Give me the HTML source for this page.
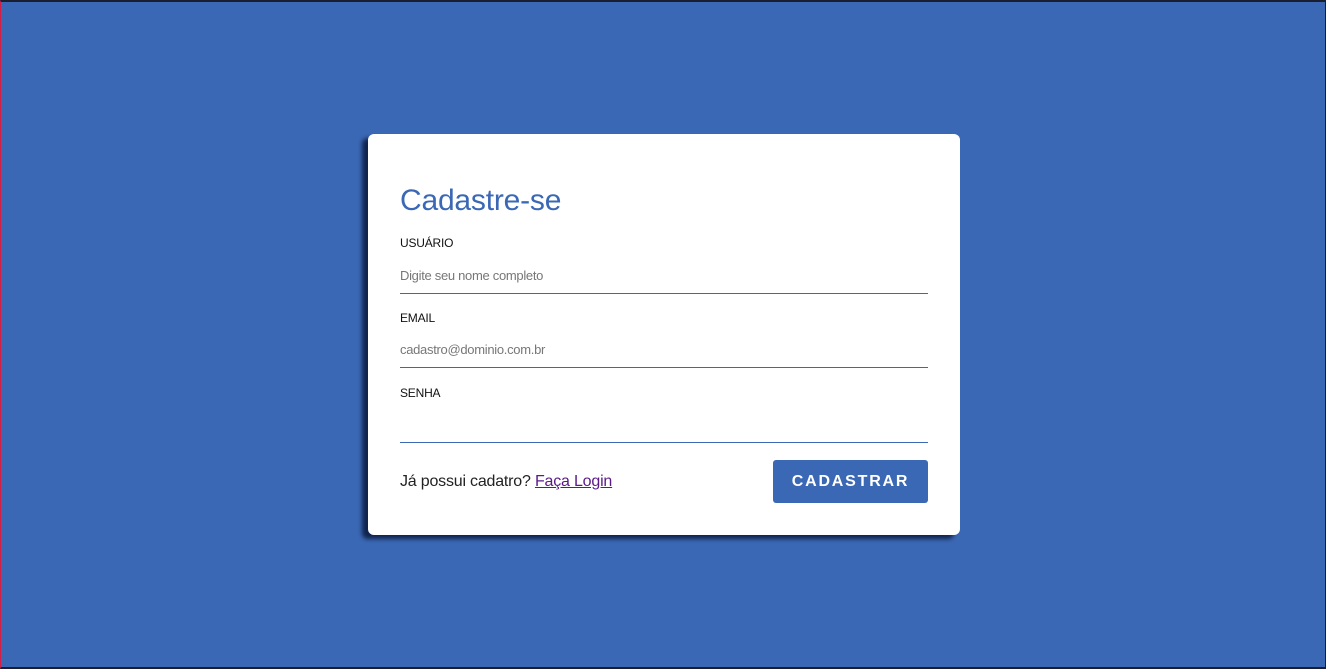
<!DOCTYPE html>
<html><head><meta charset="utf-8"><style>
html,body{margin:0;padding:0;}
body{width:1326px;height:669px;background:#3b68b5;position:relative;overflow:hidden;font-family:"Liberation Sans",sans-serif;}
.frame{position:absolute;left:0;top:0;width:1326px;height:669px;box-sizing:border-box;border-top:2px solid #1b1e2e;border-bottom:2px solid #1b1e2e;border-right:1px solid #1b1e2e;border-left:1px solid #d0204a;}
.card{position:absolute;left:368px;top:134px;width:592px;height:401px;background:#fff;border-radius:6px;box-shadow:-6px 4px 4px rgba(10,25,60,.85);}
h1{position:absolute;left:32px;top:50px;margin:0;font-weight:normal;font-size:30px;color:#3b68b5;letter-spacing:-0.2px;}
.lbl{position:absolute;left:32px;font-size:12px;color:#111;letter-spacing:-0.2px;}
.ph{position:absolute;left:32px;font-size:13px;color:#777;letter-spacing:-0.3px;}
.line{position:absolute;left:32px;width:528px;height:1px;background:#3b68b5;}
.txt{position:absolute;left:32px;top:339px;font-size:16px;color:#222;letter-spacing:-0.2px;}
.txt a{color:#5a1a8a;text-decoration:underline;}
.btn{position:absolute;left:405px;top:326px;width:155px;height:43px;background:#3b68b5;border-radius:3px;color:#fff;font-weight:bold;font-size:16px;letter-spacing:1.8px;text-align:center;line-height:43px;}
</style></head><body>
<div class="frame"></div>
<div class="card">
<h1>Cadastre-se</h1>
<div class="lbl" style="top:102px">USUÁRIO</div>
<div class="ph" style="top:134px">Digite seu nome completo</div>
<div class="line" style="top:159px"></div>
<div class="lbl" style="top:177px">EMAIL</div>
<div class="ph" style="top:208px">cadastro@dominio.com.br</div>
<div class="line" style="top:233px"></div>
<div class="lbl" style="top:252px">SENHA</div>
<div class="line" style="top:308px"></div>
<div class="txt">Já possui cadatro? <a>Faça Login</a></div>
<div class="btn">CADASTRAR</div>
</div>
</body></html>
